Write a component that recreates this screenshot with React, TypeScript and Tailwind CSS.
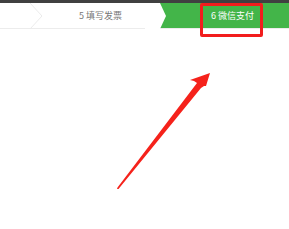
export default function App() {
  return (
    <div className="relative w-[289px] h-[229px] bg-white overflow-hidden" style={{ fontFamily: '"Noto Sans CJK SC", "Noto Sans", sans-serif' }}>
      <div className="h-[3px] bg-[#404040]" />
      <div className="flex h-[26px] border-b border-[#ececec] bg-white">
        <div className="relative w-[145px] flex items-center">
          <svg className="absolute left-0 top-0" width="145" height="26" viewBox="0 0 145 26">
            <polyline points="30,0 42,13 30,26" fill="none" stroke="#ebebeb" strokeWidth="1" />
          </svg>
          <span className="relative ml-[79px] text-[9px] leading-none text-[#777777]">5 填写发票</span>
        </div>
        <div className="relative flex-1 flex items-center bg-[#43b549]">
          <svg className="absolute left-0 top-0" width="26" height="26" viewBox="0 0 26 26">
            <polygon points="0,0 15,0 21,13 15,26 0,26" fill="#ffffff" />
          </svg>
          <span className="relative ml-[66px] text-[9px] leading-none text-white">6 微信支付</span>
        </div>
      </div>
      <div className="absolute left-[200px] top-[3px] w-[63px] h-[34px] border-[3px] border-[#f21d1d] rounded-[2px]" />
      <svg className="absolute left-0 top-0" width="289" height="229" viewBox="0 0 289 229">
        <polygon points="117,189 118.5,189 201,88 204,86 206,86 210,73 190,80 194,81 197,83 117.5,187.5" fill="#f5221b" />
      </svg>
    </div>
  );
}
